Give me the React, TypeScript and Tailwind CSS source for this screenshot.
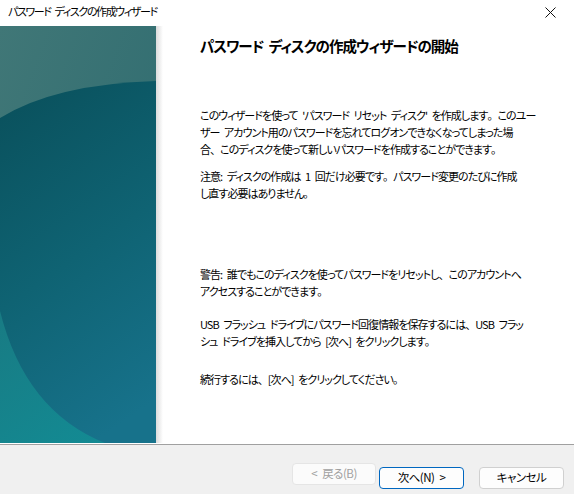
import React from "react";

// 句読点だけは全角幅のまま (palt を外す)
function J({ t }: { t: string }) {
  const parts = t.split(/([。、])/);
  return (
    <>
      {parts.map((p, i) =>
        p === "。" || p === "、" ? (
          <span key={i} className="[font-feature-settings:normal]">
            {p}
          </span>
        ) : (
          <React.Fragment key={i}>{p}</React.Fragment>
        ),
      )}
    </>
  );
}

function SideArt() {
  return (
    <svg width="156" height="417" viewBox="0 0 156 417" className="block">
      <defs>
        <linearGradient id="bgTop" x1="0" y1="0" x2="1" y2="1">
          <stop offset="0" stopColor="#407777" />
          <stop offset="1" stopColor="#2c6a6f" />
        </linearGradient>
        <linearGradient id="dark" x1="0.3" y1="0" x2="0.6" y2="1">
          <stop offset="0" stopColor="#0a525e" />
          <stop offset="0.5" stopColor="#0f6373" />
          <stop offset="1" stopColor="#17728b" />
        </linearGradient>
        <linearGradient id="light" x1="0" y1="0" x2="0.6" y2="1">
          <stop offset="0" stopColor="#1a7f86" />
          <stop offset="1" stopColor="#138d93" />
        </linearGradient>
      </defs>
      <rect width="156" height="417" fill="url(#bgTop)" />
      <path d="M0,92 Q55,58 156,55 L156,417 L0,417 Z" fill="url(#dark)" />
      <path d="M0,285 Q25,385 105,417 L0,417 Z" fill="url(#light)" opacity="0.85" />
    </svg>
  );
}

function Button({
  children,
  disabled,
  primary,
}: {
  children: React.ReactNode;
  disabled?: boolean;
  primary?: boolean;
}) {
  return (
    <button
      className={
        disabled
          ? "h-[22px] w-[84px] rounded-[4px] border border-[#e5e5e5] bg-[#fbfbfb] text-[11.5px] tracking-[-0.5px] [word-spacing:3px] text-[#a0a0a0]"
          : primary
            ? "h-[22px] w-[85px] rounded-[4px] border border-[#0067c0] bg-[#fdfdfd] text-[11.5px] tracking-[-0.5px] [word-spacing:3px] text-black"
            : "h-[22px] w-[85px] rounded-[4px] border border-[#d0d0d0] bg-[#fdfdfd] text-[11.5px] tracking-[-0.5px] [word-spacing:3px] text-black"
      }
    >
      {children}
    </button>
  );
}

export default function App() {
  return (
    <div className="flex h-[494px] w-[574px] flex-col overflow-hidden bg-white font-['Noto_Sans_CJK_JP','Noto_Sans',sans-serif] text-black [font-feature-settings:'palt']">
      {/* title bar */}
      <div className="flex h-[26px] items-start justify-between">
        <div className="pl-[8px] pt-[3px] text-[11px] leading-[16px] tracking-[-1.4px] [word-spacing:3px] whitespace-nowrap">
          パスワード ディスクの作成ウィザード
        </div>
        <svg width="11" height="11" viewBox="0 0 11 11" className="mr-[18px] mt-[7px]">
          <path d="M0.5 0.5 L10.5 10.5 M10.5 0.5 L0.5 10.5" stroke="#111" strokeWidth="1" />
        </svg>
      </div>

      {/* body */}
      <div className="flex h-[418px]">
        <SideArt />
        <div className="h-[417px] w-[7px] bg-gradient-to-r from-[#dcdcdc] to-white" />
        <div className="flex-1 whitespace-nowrap pl-[37px] pt-[10px] text-[11px] leading-[17px] tracking-[-0.95px] [word-spacing:3px]">
          <h1 className="text-[14.5px] font-bold leading-[20px] tracking-[-1px] [word-spacing:3px]">
            パスワード ディスクの作成ウィザードの開始
          </h1>
          <p className="mt-[51px]">
            <J t="このウィザードを使って 'パスワード リセット ディスク' を作成します。このユー" />
            <br />
            <J t="ザー アカウント用のパスワードを忘れてログオンできなくなってしまった場" />
            <br />
            <J t="合、このディスクを使って新しいパスワードを作成することができます。" />
          </p>
          <p className="mt-[10px]">
            <J t="注意: ディスクの作成は 1 回だけ必要です。パスワード変更のたびに作成" />
            <br />
            <J t="し直す必要はありません。" />
          </p>
          <p className="mt-[64px]">
            <J t="警告: 誰でもこのディスクを使ってパスワードをリセットし、このアカウントへ" />
            <br />
            <J t="アクセスすることができます。" />
          </p>
          <p className="mt-[16px]">
            <J t="USB フラッシュ ドライブにパスワード回復情報を保存するには、USB フラッ" />
            <br />
            <J t="シュ ドライブを挿入してから [次へ] をクリックします。" />
          </p>
          <p className="mt-[21px]">
            <J t="続行するには、[次へ] をクリックしてください。" />
          </p>
        </div>
      </div>

      {/* footer */}
      <div className="flex flex-1 items-start justify-end border-t border-[#a0a0a0] bg-[#f0f0f0] pr-[10px] pt-[18px]">
        <Button disabled>&lt; 戻る(B)</Button>
        <div className="ml-[3px]">
          <Button primary>次へ(N) &gt;</Button>
        </div>
        <div className="ml-[15px]">
          <Button>キャンセル</Button>
        </div>
      </div>
    </div>
  );
}
